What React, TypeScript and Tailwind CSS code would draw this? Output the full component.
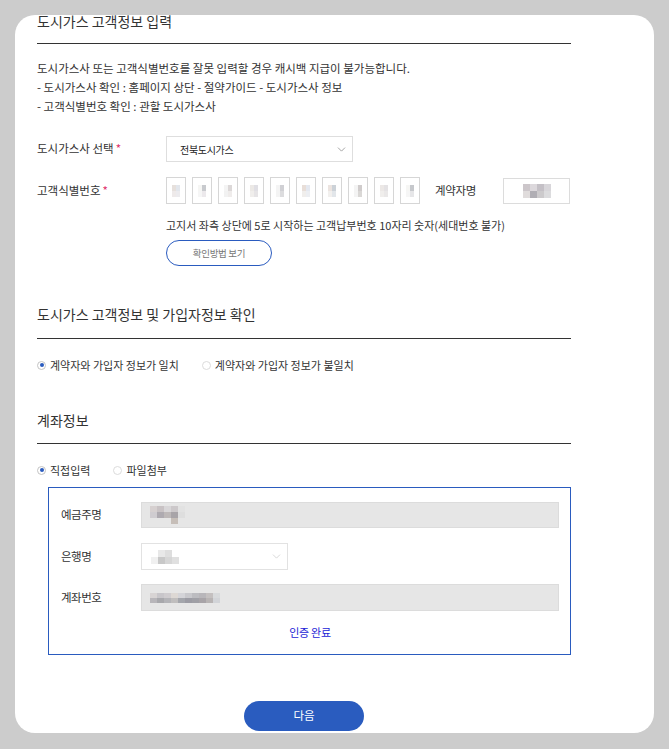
import { ChevronDown } from 'lucide-react'

// pixelated placeholders for masked personal values
const Pixels = ({ rows, cell }: { rows: string[][]; cell: string }) => (
  <div className="flex flex-col">
    {rows.map((row, i) => (
      <div key={i} className="flex">
        {row.map((c, j) => (
          <div key={j} className={cell} style={{ backgroundColor: c }} />
        ))}
      </div>
    ))}
  </div>
)

const digitMasks = [
  [['#e6e0dc', '#e2e6ec'], ['#eeeaea', '#ecebee']],
  [['#f6f6f4', '#c8cace'], ['#f6f6f6', '#ece9ec']],
  [['#f4f4f4', '#dcd8d8'], ['#f2f2f2', '#efeceb']],
  [['#ece9e6', '#e0dfe4'], ['#f0eeec', '#e6e4e6']],
  [['#f4f4f4', '#d0d0d4'], ['#f4f4f4', '#dcdcde']],
  [['#e8ded8', '#e4e8f0'], ['#f0eeec', '#eceef2']],
  [['#ece4e0', '#ccd2d8'], ['#f2f0ee', '#e2e6ea']],
  [['#f4f4f4', '#d0cccc'], ['#f4f4f4', '#dad8d6']],
  [['#ece8e6', '#e4e2e4'], ['#f0eeec', '#eae8e8']],
  [['#f6f6f4', '#c6c8cc'], ['#f6f6f6', '#e6e6e8']],
]

const Radio = ({ checked, label }: { checked?: boolean; label: string }) => (
  <label className="flex items-center gap-[4px]">
    <span
      className={`flex h-[9px] w-[9px] items-center justify-center rounded-full border ${
        checked ? 'border-[#c4c4c4]' : 'border-[#dcdcdc]'
      } bg-white`}
    >
      {checked && <span className="h-[4px] w-[4px] rounded-full bg-[#2a5bbf]" />}
    </span>
    <span className="text-[11px] leading-[16px] text-[#333]">{label}</span>
  </label>
)

const Required = () => <span className="ml-[2px] text-[#e0306a]">*</span>

export default function App() {
  return (
    <div className="min-h-[749px] bg-[#cccccc] pt-[15px] font-['Noto_Sans_CJK_KR',sans-serif] text-[#333]">
      <div className="mx-[15px] h-[718px] overflow-hidden rounded-[20px] bg-white">
        <div className="pl-[22px] pr-[83px]">
          {/* 도시가스 고객정보 입력 */}
          <h2 className="-mt-[4px] h-[33px] border-b border-[#333] text-[14px] font-normal leading-[20px]">
            도시가스 고객정보 입력
          </h2>

          <div className="mt-[15px] text-[11.5px] leading-[19px]">
            <p>도시가스사 또는 고객식별번호를 잘못 입력할 경우 캐시백 지급이 불가능합니다.</p>
            <p>- 도시가스사 확인 : 홈페이지 상단 - 절약가이드 - 도시가스사 정보</p>
            <p>- 고객식별번호 확인 : 관할 도시가스사</p>
          </div>

          <div className="mt-[20px] flex items-center">
            <div className="w-[129px] text-[11.5px]">
              도시가스사 선택
              <Required />
            </div>
            <div className="flex h-[26px] w-[187px] items-center justify-between border border-[#dedede] pl-[13px] pr-[4px]">
              <span className="text-[10px] tracking-[-0.3px] text-[#222]">전북도시가스</span>
              <ChevronDown size={13} strokeWidth={1.4} color="#888" />
            </div>
          </div>

          <div className="mt-[15px] flex items-center">
            <div className="w-[129px] text-[11.5px]">
              고객식별번호
              <Required />
            </div>
            <div className="flex gap-[6px]">
              {digitMasks.map((rows, i) => (
                <div key={i} className="flex h-[27px] w-[20px] items-center justify-center border border-[#d6d6d6]">
                  <Pixels rows={rows} cell="h-[6px] w-[4px]" />
                </div>
              ))}
            </div>
            <div className="ml-[15px] w-[68px] text-[11.5px] tracking-[-0.3px]">계약자명</div>
            <div className="flex h-[26px] w-[67px] items-center justify-center border border-[#dcdcdc]">
              <Pixels
                rows={[
                  ['#ccc6ca', '#dcd8dc', '#c4c0c6', '#d8d6da'],
                  ['#e0dcdc', '#b0aeb4', '#cccacc', '#dcdcde'],
                ]}
                cell="h-[7px] w-[7px]"
              />
            </div>
          </div>

          <p className="ml-[129px] mt-[13px] text-[11px] leading-[16px]">
            고지서 좌측 상단에 5로 시작하는 고객납부번호 10자리 숫자(세대번호 불가)
          </p>
          <button className="ml-[129px] mt-[7px] flex h-[26px] w-[106px] items-center justify-center rounded-full border border-[#2a5bbf] text-[9.5px] tracking-[-0.3px] text-[#777]">
            확인방법 보기
          </button>

          {/* 도시가스 고객정보 및 가입자정보 확인 */}
          <h2 className="mt-[38px] h-[35px] border-b border-[#333] text-[14px] font-normal leading-[20px]">
            도시가스 고객정보 및 가입자정보 확인
          </h2>
          <div className="mt-[18px] flex gap-[23px]">
            <Radio checked label="계약자와 가입자 정보가 일치" />
            <Radio label="계약자와 가입자 정보가 불일치" />
          </div>

          {/* 계좌정보 */}
          <h2 className="mt-[37px] h-[34px] border-b border-[#333] text-[14px] font-normal leading-[20px]">
            계좌정보
          </h2>
          <div className="mt-[18px] flex gap-[23px]">
            <Radio checked label="직접입력" />
            <Radio label="파일첨부" />
          </div>

          <div className="ml-[11px] mt-[9px] border border-[#2a5bbf] pb-[14px] pl-[12px] pr-[11px] pt-[14px]">
            <div className="flex items-center">
              <div className="w-[80px] text-[11.5px] tracking-[-0.5px]">예금주명</div>
              <div className="flex h-[26px] flex-1 items-center border border-[#dcdcdc] bg-[#e6e6e6] pl-[8px]">
                <Pixels
                  rows={[
                    ['#d6d0d0', '#c8c2c4', '#d8d6d8', '#ccc8ca', '#e2e2e2'],
                    ['#cfccd0', '#aeaab0', '#bdb8b8', '#a8a4a8', '#dedede'],
                    ['#e6e6e6', '#e6e6e6', '#e6e6e6', '#c6beb8', '#e6e6e6'],
                  ]}
                  cell="h-[6px] w-[7px]"
                />
              </div>
            </div>
            <div className="mt-[15px] flex items-center">
              <div className="w-[80px] text-[11.5px] tracking-[-0.5px]">은행명</div>
              <div className="flex h-[27px] w-[147px] items-center justify-between border border-[#e2e2e2] bg-white pl-[9px] pr-[4px]">
                <Pixels
                  rows={[
                    ['#ffffff', '#e8e8e8', '#dedede', '#ffffff'],
                    ['#f0f0f0', '#c8c8c8', '#d6d6d6', '#e0e0e0'],
                  ]}
                  cell="h-[7px] w-[7px]"
                />
                <ChevronDown size={13} strokeWidth={1.2} color="#c4c4c4" />
              </div>
            </div>
            <div className="mt-[14px] flex items-center">
              <div className="w-[80px] text-[11.5px] tracking-[-0.5px]">계좌번호</div>
              <div className="flex h-[27px] flex-1 items-center border border-[#dcdcdc] bg-[#e6e6e6] pl-[8px]">
                <Pixels
                  rows={[
                    ['#d8d4d4', '#c8c6ca', '#cfcccf', '#ddd8d4', '#d4d4d8', '#c8c8cc', '#bcbcc0', '#b8b6ba', '#c4c0c0', '#d8dadc', '#e6e6e6'],
                    ['#b8b6ba', '#a8a8ac', '#b4b4b8', '#c0bebe', '#a4a6ac', '#9c9ca4', '#a0a0a6', '#a8a4a8', '#b8b4b4', '#d2d4d8', '#e6e6e6'],
                  ]}
                  cell="h-[5px] w-[7px]"
                />
              </div>
            </div>
            <p className="mt-[13px] text-center text-[11px] leading-[16px] tracking-[-0.3px] text-[#2323d6]">인증 완료</p>
          </div>

          <button className="mx-auto mt-[46px] flex h-[30px] w-[120px] items-center justify-center rounded-full bg-[#2a5cbf] text-[11.5px] text-white">
            다음
          </button>
        </div>
      </div>
    </div>
  )
}
